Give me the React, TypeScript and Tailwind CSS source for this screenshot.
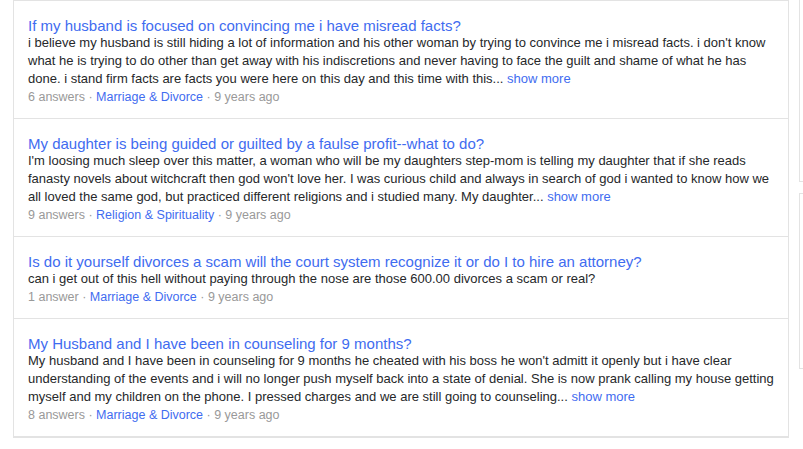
import React from 'react';

interface Question {
  title: string;
  body: string;
  truncated: boolean;
  answers: string;
  category: string;
  age: string;
}

const questions: Question[] = [
  {
    title: 'If my husband is focused on convincing me i have misread facts?',
    body: "i believe my husband is still hiding a lot of information and his other woman by trying to convince me i misread facts. i don't know what he is trying to do other than get away with his indiscretions and never having to face the guilt and shame of what he has done. i stand firm facts are facts you were here on this day and this time with this...",
    truncated: true,
    answers: '6 answers',
    category: 'Marriage & Divorce',
    age: '9 years ago',
  },
  {
    title: 'My daughter is being guided or guilted by a faulse profit--what to do?',
    body: "I'm loosing much sleep over this matter, a woman who will be my daughters step-mom is telling my daughter that if she reads fanasty novels about witchcraft then god won't love her. I was curious child and always in search of god i wanted to know how we all loved the same god, but practiced different religions and i studied many. My daughter...",
    truncated: true,
    answers: '9 answers',
    category: 'Religion & Spirituality',
    age: '9 years ago',
  },
  {
    title: 'Is do it yourself divorces a scam will the court system recognize it or do I to hire an attorney?',
    body: 'can i get out of this hell without paying through the nose are those 600.00 divorces a scam or real?',
    truncated: false,
    answers: '1 answer',
    category: 'Marriage & Divorce',
    age: '9 years ago',
  },
  {
    title: 'My Husband and I have been in counseling for 9 months?',
    body: "My husband and I have been in counseling for 9 months he cheated with his boss he won't admitt it openly but i have clear understanding of the events and i will no longer push myself back into a state of denial. She is now prank calling my house getting myself and my children on the phone. I pressed charges and we are still going to counseling...",
    truncated: true,
    answers: '8 answers',
    category: 'Marriage & Divorce',
    age: '9 years ago',
  },
];

const QuestionRow: React.FC<{ q: Question; last: boolean }> = ({ q, last }) => (
  <li className={last ? 'px-[14px] pt-[17px] pb-[12px]' : 'px-[14px] pt-[17px] pb-[12px] border-b border-[#e3e3e3]'}>
    <a href="#" className="block text-[15px] leading-[16px] text-[#3f6cf0]">
      {q.title}
    </a>
    <p className="text-[13px] leading-[18px] text-[#26282a]">
      {q.body}
      {q.truncated && (
        <>
          {' '}
          <a href="#" className="text-[#3f6cf0]">show more</a>
        </>
      )}
    </p>
    <div className="text-[12.5px] leading-[18px] text-[#999]">
      {q.answers} · <a href="#" className="text-[#3f6cf0]">{q.category}</a> · {q.age}
    </div>
  </li>
);

export default function App() {
  return (
    <div className="h-[449px] w-[803px] overflow-hidden bg-white font-['Liberation_Sans',Arial,sans-serif]">
      <div className="flex items-start gap-[10px] pl-[13px]">
        <ul className="w-[776px] shrink-0 border border-b-2 border-[#e3e3e3] bg-white">
          {questions.map((q, i) => (
            <QuestionRow key={i} q={q} last={i === questions.length - 1} />
          ))}
        </ul>
        <div className="flex w-[200px] shrink-0 flex-col gap-[11px]">
          <div className="h-[182px] border border-t-0 border-[#e3e3e3]" />
          <div className="h-[176px] border border-[#e3e3e3]" />
        </div>
      </div>
    </div>
  );
}
